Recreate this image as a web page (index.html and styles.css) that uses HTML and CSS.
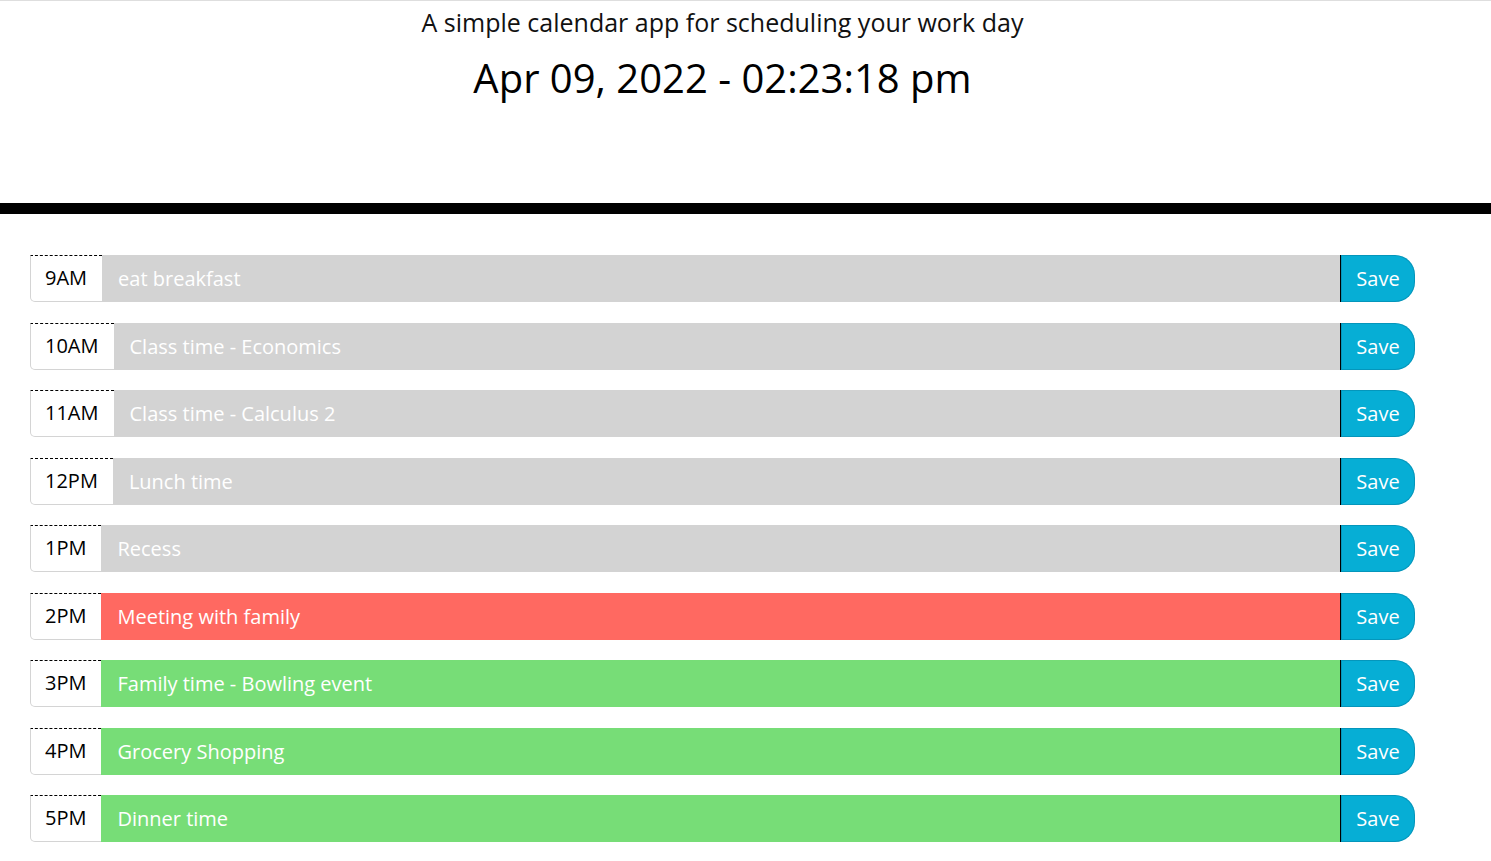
FILE: index.html
```html
<!DOCTYPE html>
<html lang="en">
<head>
<meta charset="utf-8">
<title>Work Day Scheduler</title>
<link rel="stylesheet" href="styles.css">
</head>
<body>
<header class="jumbotron">
  <p class="lead">A simple calendar app for scheduling your work day</p>
  <p class="current-day">Apr 09, 2022 - 02:23:18 pm</p>
</header>
<main class="container">
  <div class="time-block"><div class="hour">9AM</div><div class="description past">eat breakfast</div><button class="save-btn">Save</button></div>
  <div class="time-block"><div class="hour">10AM</div><div class="description past">Class time - Economics</div><button class="save-btn">Save</button></div>
  <div class="time-block"><div class="hour">11AM</div><div class="description past">Class time - Calculus 2</div><button class="save-btn">Save</button></div>
  <div class="time-block"><div class="hour">12PM</div><div class="description past">Lunch time</div><button class="save-btn">Save</button></div>
  <div class="time-block"><div class="hour">1PM</div><div class="description past">Recess</div><button class="save-btn">Save</button></div>
  <div class="time-block"><div class="hour">2PM</div><div class="description present">Meeting with family</div><button class="save-btn">Save</button></div>
  <div class="time-block"><div class="hour">3PM</div><div class="description future">Family time - Bowling event</div><button class="save-btn">Save</button></div>
  <div class="time-block"><div class="hour">4PM</div><div class="description future">Grocery Shopping</div><button class="save-btn">Save</button></div>
  <div class="time-block"><div class="hour">5PM</div><div class="description future">Dinner time</div><button class="save-btn">Save</button></div>
</main>
</body>
</html>
```
FILE: styles.css
```css
* { box-sizing: border-box; }
body {
  margin: 0;
  font-family: "Open Sans", "Noto Sans", sans-serif;
  color: #000;
  background: #fff;
  line-height: 1.5;
}
.jumbotron {
  border-top: 1px solid #dedede;
  border-bottom: 11px solid #000;
  height: 214px;
  text-align: center;
  padding: 3px 46px 0 0;
}
.lead {
  margin: 0;
  font-size: 25px;
  font-weight: 400;
  line-height: 36px;
  color: #111;
}
.current-day {
  margin: 8px 0 0;
  font-size: 40px;
  line-height: 60px;
}
.container {
  padding: 41px 0 20px 30px;
  width: 1415px;
  display: flex;
  flex-direction: column;
  gap: 20.5px;
}
.time-block {
  display: flex;
  height: 47px;
}
.hour {
  padding: 0 15px 0 14px;
  font-size: 20px;
  line-height: 44px;
  border-top: 1px dashed #000;
  border-left: 1px solid #d4d4d4;
  border-bottom: 1px solid #d4d4d4;
  border-bottom-left-radius: 5px;
  background: #fff;
  color: #000;
}
.description {
  flex: 1;
  padding: 0 16px;
  font-size: 20px;
  line-height: 47px;
  color: #fff;
}
.past { background: #d3d3d3; }
.present { background: #ff6961; }
.future { background: #77dd77; }
.save-btn {
  width: 75px;
  height: 47px;
  border: none;
  border-left: 1px solid #000;
  border-radius: 0 20px 20px 0;
  background: #06aed5;
  color: #fff;
  font-family: inherit;
  font-size: 20px;
  padding: 0;
  box-shadow: inset 0 0 0 1px rgba(0,80,110,0.25);
}
```
